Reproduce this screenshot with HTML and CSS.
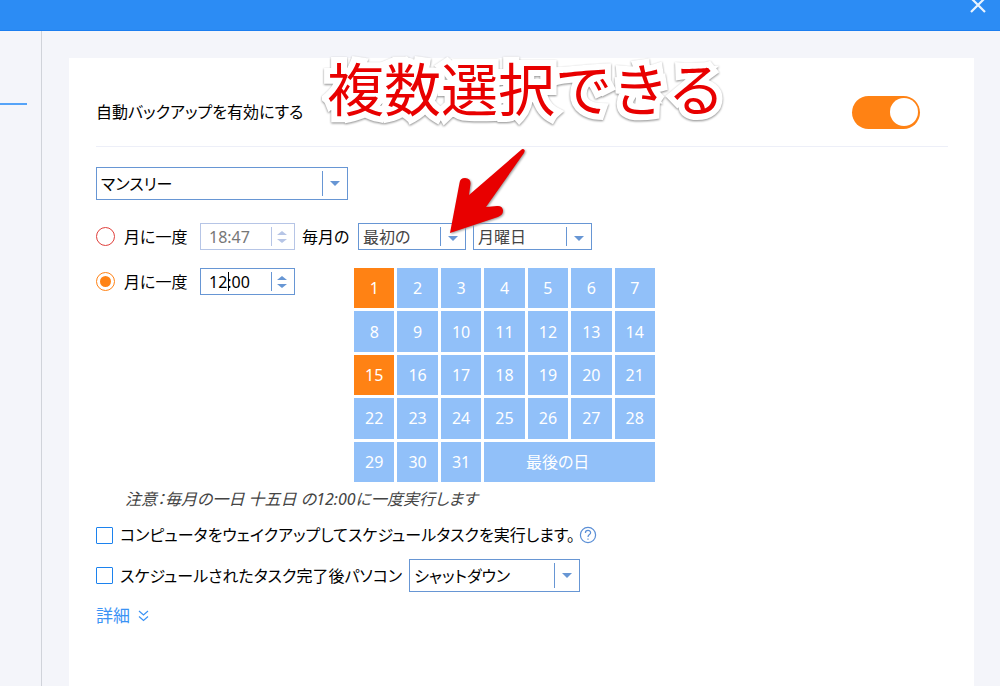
FILE: index.html
```html
<!DOCTYPE html>
<html lang="ja">
<head>
<meta charset="utf-8">
<title>自動バックアップ</title>
<link rel="stylesheet" href="styles.css">
</head>
<body>
<header class="titlebar">
  <button class="close" type="button" aria-label="閉じる">
    <svg width="16" height="16" viewBox="0 0 16 16"><path d="M1 1 15 15M15 1 1 15" fill="none" stroke="#e9f3ff" stroke-width="2.2"/></svg>
  </button>
</header>
<div class="layout">
  <nav class="sidebar"><div class="tab-line"></div></nav>
  <main class="content">
    <form class="panel">
      <div class="heading">
        <label for="auto">自動バックアップを有効にする</label>
        <input class="switch" id="auto" type="checkbox" role="switch" checked>
      </div>

      <div class="select select-cycle">
        <select aria-label="周期"><option>マンスリー</option></select>
        <svg class="arrow" viewBox="0 0 10 6"><path d="M0 0H10L5 5Z"/></svg>
      </div>

      <div class="row row-weekday">
        <input class="radio" id="r1" name="mode" type="radio">
        <label class="once" for="r1">月に一度</label>
        <div class="time time-off">
          <input type="text" aria-label="時刻" value="18:47">
          <svg class="spin" viewBox="0 0 10 14"><path d="M0 5 5 1 10 5ZM0 9H10L5 13Z"/></svg>
        </div>
        <span class="every">毎月の</span>
        <div class="select select-small select-order">
          <select aria-label="週"><option>最初の</option></select>
          <svg class="arrow" viewBox="0 0 10 6"><path d="M0 0H10L5 5Z"/></svg>
        </div>
        <div class="select select-small select-day">
          <select aria-label="曜日"><option>月曜日</option></select>
          <svg class="arrow" viewBox="0 0 10 6"><path d="M0 0H10L5 5Z"/></svg>
        </div>
      </div>

      <div class="dates">
        <div class="row">
          <input class="radio" id="r2" name="mode" type="radio" checked>
          <label class="once" for="r2">月に一度</label>
          <div class="time">
            <input type="text" aria-label="時刻" value="12:00">
            <span class="caret"></span>
            <svg class="spin" viewBox="0 0 10 14"><path d="M0 5 5 1 10 5ZM0 9H10L5 13Z"/></svg>
          </div>
        </div>
        <div class="calendar">
          <button type="button" class="on">1</button><button type="button">2</button><button type="button">3</button><button type="button">4</button><button type="button">5</button><button type="button">6</button><button type="button">7</button>
          <button type="button">8</button><button type="button">9</button><button type="button">10</button><button type="button">11</button><button type="button">12</button><button type="button">13</button><button type="button">14</button>
          <button type="button" class="on">15</button><button type="button">16</button><button type="button">17</button><button type="button">18</button><button type="button">19</button><button type="button">20</button><button type="button">21</button>
          <button type="button">22</button><button type="button">23</button><button type="button">24</button><button type="button">25</button><button type="button">26</button><button type="button">27</button><button type="button">28</button>
          <button type="button">29</button><button type="button">30</button><button type="button">31</button><button type="button" class="last">最後の日</button>
        </div>
      </div>

      <p class="note">注意：毎月の一日 十五日 の12:00に一度実行します</p>

      <div class="row row-wake">
        <input class="check" id="wake" type="checkbox">
        <label for="wake">コンピュータをウェイクアップしてスケジュールタスクを実行します。</label>
        <button class="help" type="button" aria-label="ヘルプ">
          <svg width="18" height="18" viewBox="0 0 18 18" fill="none" stroke="#5b8fd6" stroke-width="1.2"><circle cx="9" cy="9" r="7.6"/><path d="M6.4 7.1C6.4 3.6 11.6 3.7 11.6 6.7 11.6 8.7 9 8.5 9 11"/><path d="M9 12.4V13.8"/></svg>
        </button>
      </div>

      <div class="row row-after">
        <input class="check" id="after" type="checkbox">
        <label for="after">スケジュールされたタスク完了後パソコン</label>
        <div class="select select-power">
          <select aria-label="完了後の動作"><option>シャットダウン</option></select>
          <svg class="arrow" viewBox="0 0 10 6"><path d="M0 0H10L5 5Z"/></svg>
        </div>
      </div>

      <a class="more" href="#">詳細
        <svg width="11" height="12" viewBox="0 0 11 12"><path d="M1 1 5.5 5 10 1M1 6.5 5.5 10.5 10 6.5" fill="none" stroke="#3b93f5" stroke-width="1.2"/></svg>
      </a>

      <div class="callout">
        <strong>複数選択できる</strong>
        <svg class="pointer" width="84" height="90" viewBox="0 0 84 90"><path d="M6 86 15.500 36Q16 31 21 31Q27 31.500 26.500 37L25 48L77 3Q79 1 80.500 3Q81 4 80 6L42 60L53 59Q58 58.500 59 63Q59.500 68 54 70Z" fill="#e80000"/></svg>
      </div>
    </form>
  </main>
</div>
</body>
</html>
```
FILE: styles.css
```css
* { box-sizing: border-box; }

body {
  margin: 0;
  min-height: 100vh;
  display: flex;
  flex-direction: column;
  background: #f4f5fa;
  color: #000;
  font: 16px/24px "Noto Sans", "Noto Sans CJK JP", sans-serif;
  font-feature-settings: "palt";
}

button, input, select { font: inherit; font-feature-settings: inherit; color: inherit; }
button { border: 0; padding: 0; background: none; }
input { margin: 0; }
svg { display: block; }

.titlebar {
  height: 31px;
  padding-right: 14px;
  display: flex;
  justify-content: flex-end;
  align-items: flex-start;
  background: #2c8cf4;
  border-bottom: 1px solid #1b7ef0;
  overflow: hidden;
}
.close { margin-top: -3px; }

.layout { flex: 1; display: flex; }
.sidebar {
  width: 42px;
  padding-top: 72px;
  border-right: 1px solid #d0d3da;
}
.tab-line { width: 27px; height: 2px; background: #55a3f8; }
.content { flex: 1; display: flex; padding: 27px 26px 0 27px; }

.panel {
  flex: 1;
  position: relative;
  padding: 20px 26px 24px 27px;
  background: #fff;
}
.row { display: flex; align-items: center; white-space: nowrap; }

.heading {
  height: 69px;
  padding-right: 28px;
  display: flex;
  align-items: center;
  justify-content: space-between;
  border-bottom: 1px solid #edeff8;
}
.switch {
  appearance: none;
  width: 68px;
  height: 33px;
  padding: 2px;
  display: flex;
  border-radius: 17px;
  background: #ff8214;
}
.switch:checked { justify-content: flex-end; }
.switch::before {
  content: "";
  width: 28px;
  height: 28px;
  border-radius: 50%;
  background: #fff;
}

.select, .time {
  position: relative;
  border: 1px solid #6796d4;
  background: #fff;
}
.select { height: 33px; }
.select select {
  appearance: none;
  width: 100%;
  height: 100%;
  padding: 0 26px 0 4px;
  border: 0;
  background: none;
}
.select::after {
  content: "";
  position: absolute;
  top: 3px;
  bottom: 3px;
  right: 24px;
  width: 1px;
  background: #6796d4;
}
.arrow {
  position: absolute;
  right: 7px;
  top: 50%;
  width: 10px;
  height: 6px;
  margin-top: -3px;
  fill: #6796d4;
}
.select-cycle { width: 252px; margin-top: 20px; }
.select-small { height: 27px; color: #444; line-height: 22px; }
.select-small .arrow { margin-top: -1px; }
.select-order { width: 108px; }
.select-day { width: 119px; margin-left: 7px; }
.select-power { width: 171px; }

.row-weekday { margin-top: 23px; }
.radio {
  appearance: none;
  width: 19px;
  height: 19px;
  border: 1px solid #e0403c;
  border-radius: 50%;
}
.radio:checked {
  border-color: #ff8214;
  background: #ff8214 content-box;
  padding: 3px;
}
.once { width: 76px; margin-left: 9px; }
.time { width: 95px; height: 27px; }
.time input {
  width: 70px;
  height: 100%;
  padding: 0 0 0 8px;
  border: 0;
  background: none;
  outline: 0;
}
.time::after {
  content: "";
  position: absolute;
  top: 3px;
  bottom: 3px;
  right: 22px;
  width: 1px;
  background: #6796d4;
}
.spin {
  position: absolute;
  right: 7px;
  top: 6px;
  width: 10px;
  height: 14px;
  fill: #6796d4;
}
.time-off { border-color: #b6c5e6; color: #777; }
.time-off::after { background: #b6c5e6; }
.time-off .spin { fill: #b6c5e6; }
.caret {
  position: absolute;
  left: 27px;
  top: 3px;
  width: 1px;
  height: 19px;
  background: #000;
}
.every { width: 50px; margin: 0 6px 0 7px; }

.dates { display: flex; align-items: flex-start; margin-top: 18px; }
.calendar {
  width: 301px;
  height: 214px;
  margin-left: 59px;
  display: grid;
  grid-template-columns: repeat(7, 1fr);
  grid-template-rows: repeat(5, 1fr);
  gap: 3px;
}
.calendar button { background: #91c0f9; color: #fff; }
.calendar .on { background: #ff8214; }
.calendar .last { grid-column: span 4; padding-right: 24px; }

.note { margin: 5px 0 0 29px; color: #444; font-style: italic; }

.check {
  appearance: none;
  width: 17px;
  height: 17px;
  margin-right: 7px;
  border: 1px solid #1c82ee;
  border-radius: 1px;
}
.row-wake { margin-top: 12px; }
.help { margin-left: 4px; }
.row-after { margin-top: 12px; }
.row-after .select { margin-left: 7px; }
.more {
  margin-top: 12px;
  display: inline-flex;
  align-items: center;
  gap: 8px;
  color: #3b93f5;
  text-decoration: none;
  font-size: 17px;
}

.callout {
  position: absolute;
  left: 258px;
  top: -4px;
  pointer-events: none;
}
.callout strong {
  display: block;
  color: #e80000;
  font: 400 57px/64px "Noto Sans CJK JP", sans-serif;
  font-feature-settings: normal;
  white-space: nowrap;
  -webkit-text-stroke: 12px #fff;
  paint-order: stroke fill;
  filter: drop-shadow(0 1px 1px #888);
}
.pointer { margin: 29px 0 0 117px; filter: drop-shadow(1px 1px 1px #999); }
```
